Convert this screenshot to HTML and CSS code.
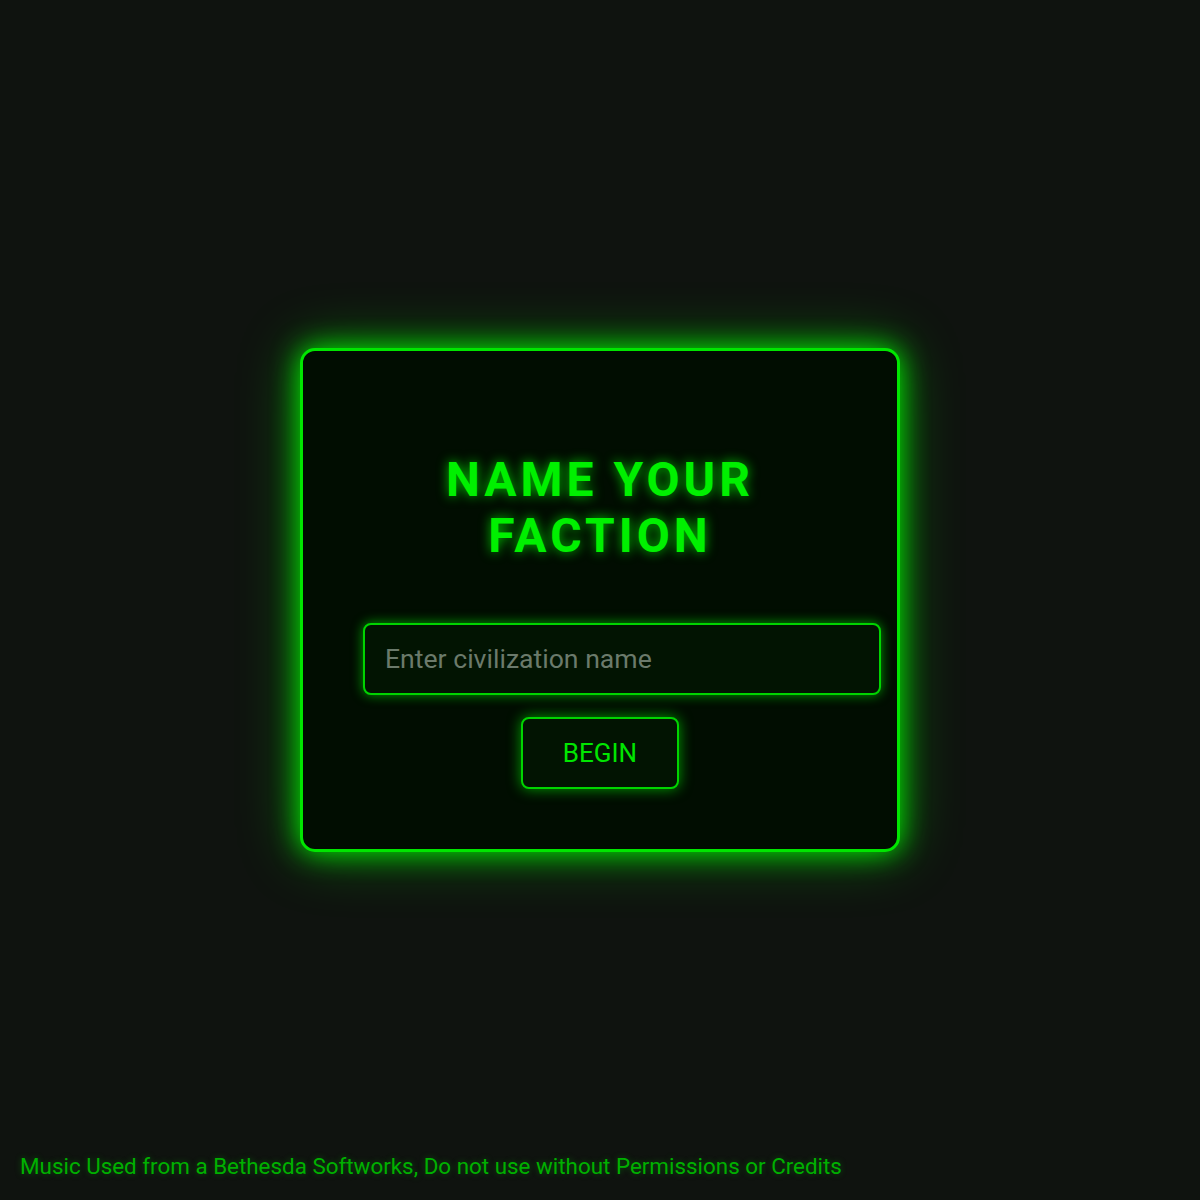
FILE: index.html
```html
<!DOCTYPE html>
<html lang="en">
<head>
<meta charset="utf-8">
<title>Name Your Faction</title>
<link rel="stylesheet" href="styles.css">
</head>
<body>
<div class="spacer"></div>
<main class="card">
  <h1 class="title">NAME YOUR FACTION</h1>
  <input class="name-input" type="text" placeholder="Enter civilization name">
  <button class="begin-btn" type="button">BEGIN</button>
</main>
<footer class="credits">Music Used from a Bethesda Softworks, Do not use without Permissions or Credits</footer>
</body>
</html>
```
FILE: styles.css
```css
html, body {
  margin: 0;
  height: 100%;
}
body {
  background: #0f130f;
  font-family: Roboto, "Liberation Sans", sans-serif;
  display: grid;
  grid-template-rows: 1fr auto 1fr;
  justify-items: center;
  overflow: hidden;
}
.card {
  box-sizing: border-box;
  width: 600px;
  padding: 60px;
  border: 3px solid #00e600;
  border-radius: 15px;
  background: #010d01;
  box-shadow: 0 0 28px rgba(0, 255, 0, 0.9), 0 0 60px rgba(0, 230, 0, 0.45);
  display: flex;
  flex-direction: column;
  align-items: center;
}
.title {
  margin: 41px 0 59px;
  font-size: 48px;
  font-weight: 700;
  letter-spacing: 4px;
  line-height: 56px;
  text-align: center;
  color: #00f000;
  text-shadow: 0 0 12px rgba(0, 255, 0, 0.75);
}
.name-input {
  box-sizing: border-box;
  width: 518px;
  align-self: flex-start;
  padding: 20px;
  font-family: Roboto, "Liberation Sans", sans-serif;
  font-size: 26.6px;
  line-height: 28px;
  color: #00e600;
  background: #021402;
  border: 2px solid #00d400;
  border-radius: 8px;
  box-shadow: 0 0 12px rgba(0, 255, 0, 0.6);
  outline: none;
}
.name-input::placeholder {
  color: #6b7a6b;
}
.begin-btn {
  margin-top: 22px;
  padding: 20px 40px;
  font-family: Roboto, "Liberation Sans", sans-serif;
  font-size: 26px;
  line-height: 28px;
  color: #00e600;
  background: #021402;
  border: 2px solid #00d400;
  border-radius: 8px;
  box-shadow: 0 0 14px rgba(0, 255, 0, 0.6);
  cursor: pointer;
}
.credits {
  justify-self: start;
  align-self: end;
  padding: 0 20px 21px;
  font-size: 22.4px;
  color: #00b000;
  text-shadow: 0 0 6px rgba(0, 200, 0, 0.35);
}
```
